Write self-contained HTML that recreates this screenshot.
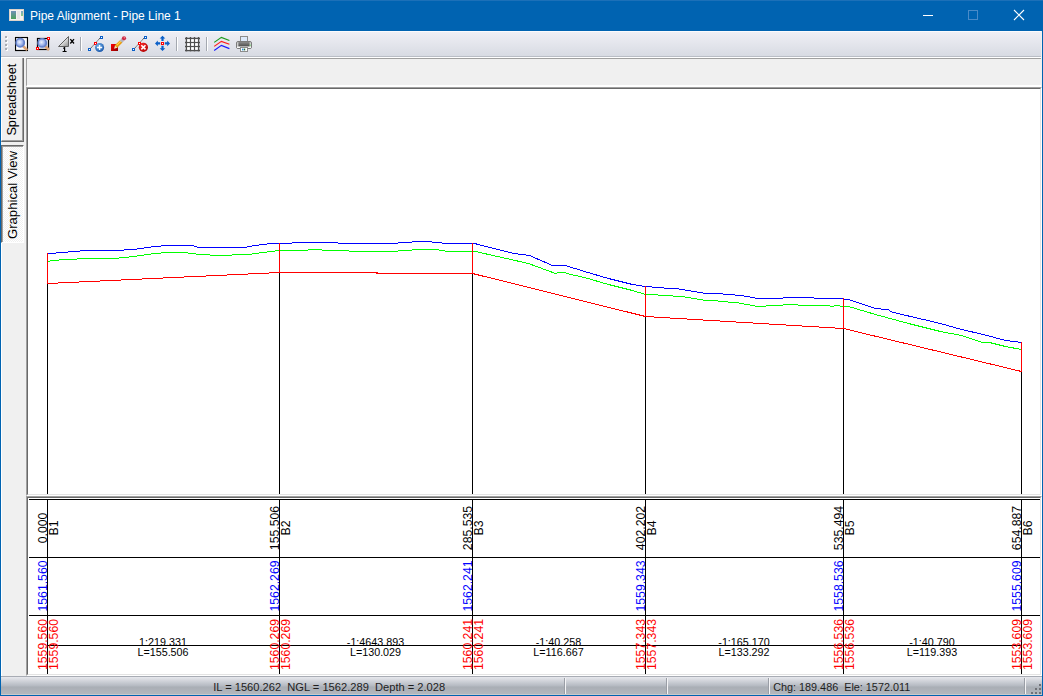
<!DOCTYPE html>
<html><head><meta charset="utf-8"><style>
*{margin:0;padding:0;box-sizing:border-box}
html,body{width:1043px;height:696px;overflow:hidden;background:#f0f0f0;font-family:"Liberation Sans",sans-serif;position:relative}
.a{position:absolute}
#title{left:0;top:0;width:1043px;height:31px;background:#0063b1;border-top:1px solid #1c70b8}
#ttext{left:30px;top:9px;color:#fff;font-size:12px;line-height:15px;white-space:nowrap}
#lb{left:0;top:31px;width:1px;height:665px;background:#0063b1}
#rb{left:1042px;top:31px;width:1px;height:665px;background:#0063b1}
#bb{left:0;top:695px;width:1043px;height:1px;background:#0063b1}
#tb{left:1px;top:31px;width:1040px;height:26px;border-top:1px solid #fbfbfd;border-bottom:1px solid #b9bdc5;background:linear-gradient(#efeff5,#d8dbe3)}
#sb{left:1px;top:676px;width:1041px;height:19px;border-top:1px solid #a8acb4;border-bottom:1px solid #c9cacc;background:linear-gradient(#e7e8ed 0px,#b4b9c1 9px,#a9aeb5 10px,#b3b7bd 17px)}
.stxt{font-size:12px;line-height:14px;color:#1e1e1e;white-space:nowrap}
svg{position:absolute;left:0;top:0}
.rl,.rr{position:absolute;font-size:12px;line-height:12px;white-space:nowrap;width:0;height:0}
.rl span,.rr span{position:absolute}
.rl{transform-origin:0 0}
.mt{position:absolute;font-size:11px;line-height:11px;white-space:nowrap;transform:translateX(-50%);color:#000}
</style></head><body>
<div class="a" id="title"></div>
<div class="a" id="ttext">Pipe Alignment - Pipe Line 1</div>
<div class="a" id="lb"></div><div class="a" id="rb"></div><div class="a" id="bb"></div>
<div class="a" id="tb"></div>

<!-- title icon -->
<div class="a" style="left:9px;top:9px;width:15px;height:12px;background:#f4f2f0;border:1px solid #ddd3ca"></div>
<div class="a" style="left:11px;top:11px;width:5px;height:8px;background:linear-gradient(#7090b8,#4aa05a)"></div>
<div class="a" style="left:17px;top:11px;width:3px;height:8px;background:#e6e6e6"></div>
<div class="a" style="left:21px;top:11px;width:2px;height:5px;background:linear-gradient(#7aa0d0,#8cd080)"></div>
<!-- window buttons -->
<div class="a" style="left:923px;top:15px;width:10px;height:1px;background:#fff"></div>
<div class="a" style="left:968px;top:10px;width:10px;height:10px;border:1px solid #4a8bc8"></div>
<svg width="1043" height="31" style="position:absolute;left:0;top:0"><path d="M1014 10 L1024 20 M1024 10 L1014 20" stroke="#fff" stroke-width="1.1" fill="none"/></svg>
<!-- toolbar grip -->
<div class="a" style="left:5px;top:36px;width:2px;height:2px;background:#a9acb3;box-shadow:1px 1px 0 #fff,0 4px 0 #a9acb3,1px 5px 0 #fff,0 8px 0 #a9acb3,1px 9px 0 #fff,0 12px 0 #a9acb3,1px 13px 0 #fff"></div>
<!-- separators -->
<div class="a" style="left:80px;top:37px;width:1px;height:14px;background:#a4a8b0;box-shadow:1px 0 0 #fff"></div>
<div class="a" style="left:176px;top:37px;width:1px;height:14px;background:#a4a8b0;box-shadow:1px 0 0 #fff"></div>
<div class="a" style="left:206px;top:37px;width:1px;height:14px;background:#a4a8b0;box-shadow:1px 0 0 #fff"></div>
<svg width="1043" height="60" style="position:absolute;left:0;top:0">
<defs>
<radialGradient id="lens" cx="0.42" cy="0.42" r="0.6"><stop offset="0" stop-color="#eef3fd"/><stop offset="0.55" stop-color="#a6baee"/><stop offset="1" stop-color="#6784cc"/></radialGradient>
<linearGradient id="tri" x1="0" y1="0" x2="1" y2="1"><stop offset="0" stop-color="#ffffff"/><stop offset="0.5" stop-color="#e0e0e0"/><stop offset="1" stop-color="#8a8a8a"/></linearGradient>
<radialGradient id="bc" cx="0.4" cy="0.35" r="0.7"><stop offset="0" stop-color="#7ab8f0"/><stop offset="1" stop-color="#1553a8"/></radialGradient>
<radialGradient id="rc" cx="0.4" cy="0.35" r="0.7"><stop offset="0" stop-color="#ff3030"/><stop offset="1" stop-color="#b00000"/></radialGradient>
<linearGradient id="rsq" x1="0" y1="0" x2="1" y2="1"><stop offset="0" stop-color="#ff0000"/><stop offset="1" stop-color="#8a0000"/></linearGradient>
<linearGradient id="pb" x1="0" y1="0" x2="0" y2="1"><stop offset="0" stop-color="#8c8c8c"/><stop offset="1" stop-color="#4a4a4a"/></linearGradient>
</defs>
<!-- icon1 zoom extents -->
<rect x="14" y="36" width="15" height="15" fill="#fff" opacity="0.7"/>
<rect x="15.5" y="37.5" width="12" height="13" fill="#fff" stroke="#000" stroke-width="1.2"/>
<line x1="23" y1="46" x2="27.2" y2="50.2" stroke="#dba57a" stroke-width="2.6"/>
<circle cx="20.2" cy="42.8" r="4.2" fill="url(#lens)" stroke="#6683cc" stroke-width="1.5"/>
<!-- icon2 zoom window -->
<rect x="37.5" y="38.5" width="11" height="11" fill="none" stroke="#000" stroke-width="1.2"/>
<line x1="45" y1="46" x2="49" y2="50" stroke="#dba57a" stroke-width="2.6"/>
<circle cx="42.2" cy="42.9" r="4.2" fill="url(#lens)" stroke="#6683cc" stroke-width="1.5"/>
<rect x="47.5" y="37.5" width="2" height="2" fill="#fff" stroke="#f00" stroke-width="1"/>
<rect x="36.5" y="47.5" width="2" height="2" fill="#fff" stroke="#f00" stroke-width="1"/>
<!-- icon3 triangle -->
<path d="M58.5 46.5 L68.5 36.5 L68.5 46.5 Z" fill="url(#tri)" stroke="#606060" stroke-width="1"/>
<path d="M70.3 39.2 L74 43.5 M74 39.2 L70.3 43.5" stroke="#000" stroke-width="1.3"/>
<path d="M63.3 48.6 L64.6 47.6 L64.6 51.3 M62.6 51.5 L66.6 51.5" stroke="#000" stroke-width="1.2" fill="none"/>
<!-- icon4 add node -->
<line x1="90" y1="49" x2="101" y2="37" stroke="#3a3a3a" stroke-width="1" stroke-dasharray="1.2 0.5"/>
<rect x="88.5" y="48.5" width="2" height="2" fill="#fff" stroke="#0a5fc8" stroke-width="1"/>
<rect x="100.5" y="36.5" width="2" height="2" fill="#fff" stroke="#0a5fc8" stroke-width="1"/>
<rect x="94.5" y="42.5" width="2" height="2" fill="#fff" stroke="#f00" stroke-width="1"/>
<circle cx="99.6" cy="47.5" r="4.5" fill="url(#bc)"/>
<path d="M97 47.5 H102.2 M99.6 44.9 V50.1" stroke="#fff" stroke-width="1.3"/>
<!-- icon5 edit -->
<rect x="111" y="44" width="7" height="7" fill="url(#rsq)"/>
<line x1="115.8" y1="46.8" x2="121.2" y2="41.4" stroke="#e8980c" stroke-width="3.4"/>
<line x1="116.6" y1="45.4" x2="121" y2="41" stroke="#ffd44a" stroke-width="1.1"/>
<line x1="121" y1="41.6" x2="122.8" y2="39.8" stroke="#b4b4bc" stroke-width="3.4"/>
<circle cx="124" cy="38.3" r="2.1" fill="#cc2a44"/>
<circle cx="124.4" cy="37.8" r="0.8" fill="#f08090"/>
<path d="M114 48.8 L115 45.4 L117.4 47.8 Z" fill="#f2e2b4"/>
<!-- icon6 delete node -->
<line x1="134" y1="49" x2="145" y2="37" stroke="#3a3a3a" stroke-width="1" stroke-dasharray="1.2 0.5"/>
<rect x="132.5" y="48.5" width="2" height="2" fill="#fff" stroke="#0a5fc8" stroke-width="1"/>
<rect x="144.5" y="36.5" width="2" height="2" fill="#fff" stroke="#0a5fc8" stroke-width="1"/>
<rect x="138.5" y="42.5" width="2" height="2" fill="#fff" stroke="#f00" stroke-width="1"/>
<circle cx="143.4" cy="47.3" r="4.6" fill="url(#rc)"/>
<path d="M141.3 45.2 L145.5 49.4 M145.5 45.2 L141.3 49.4" stroke="#fff" stroke-width="1.5"/>
<!-- icon7 move -->
<path d="M162.5 35.8 L165.3 38.6 L163.6 38.6 L163.6 41 L161.4 41 L161.4 38.6 L159.7 38.6 Z" fill="#0a5fc8"/>
<path d="M162.5 51 L165.3 48.2 L163.6 48.2 L163.6 45.8 L161.4 45.8 L161.4 48.2 L159.7 48.2 Z" fill="#0a5fc8"/>
<path d="M155 43.4 L157.8 40.6 L157.8 42.3 L160.2 42.3 L160.2 44.5 L157.8 44.5 L157.8 46.2 Z" fill="#0a5fc8"/>
<path d="M170 43.4 L167.2 40.6 L167.2 42.3 L164.8 42.3 L164.8 44.5 L167.2 44.5 L167.2 46.2 Z" fill="#0a5fc8"/>
<rect x="161.5" y="42.5" width="2" height="2" fill="#fff" stroke="#f00" stroke-width="1"/>
<!-- grid -->
<g stroke="#505050" stroke-width="1.4">
<path d="M186.5 37 V51.5 M190.5 37 V51.5 M194.5 37 V51.5 M198.5 37 V51.5 M185 38.5 H200 M185 42.5 H200 M185 46.5 H200 M185 50.5 H200"/>
</g>
<rect x="187.2" y="39.2" width="2.6" height="2.6" fill="#fff"/><rect x="191.2" y="39.2" width="2.6" height="2.6" fill="#fff"/><rect x="195.2" y="39.2" width="2.6" height="2.6" fill="#fff"/>
<rect x="187.2" y="43.2" width="2.6" height="2.6" fill="#fff"/><rect x="191.2" y="43.2" width="2.6" height="2.6" fill="#fff"/><rect x="195.2" y="43.2" width="2.6" height="2.6" fill="#fff"/>
<rect x="187.2" y="47.2" width="2.6" height="2.6" fill="#fff"/><rect x="191.2" y="47.2" width="2.6" height="2.6" fill="#fff"/><rect x="195.2" y="47.2" width="2.6" height="2.6" fill="#fff"/>
<!-- layers -->
<g fill="none" stroke-width="1.15">
<path d="M214.2 42.4 L221.4 37.4 L229.4 40.5" stroke="#1a9a1a"/>
<path d="M214.2 46.4 L221.4 41.4 L229.4 44.3" stroke="#ff1a1a"/>
<path d="M214.2 50.5 L221.4 45.4 L229.4 48.6" stroke="#1a1aff"/>
</g>
<!-- printer -->
<rect x="240.5" y="36.5" width="7" height="6" fill="#dde9fb" stroke="#8c8c8c"/>
<rect x="236.5" y="41.5" width="15" height="7" rx="1.5" fill="#d0d0d0" stroke="#7c7c7c"/>
<rect x="238.4" y="42" width="11.2" height="4.6" fill="url(#pb)"/>
<rect x="237" y="46.6" width="14" height="1.4" fill="#f6f6f6"/>
<rect x="240.5" y="47.5" width="7" height="4" fill="#fff" stroke="#8c8c8c"/>
<rect x="242" y="48.6" width="1.4" height="1.8" fill="#2a8ee0"/><rect x="243.8" y="48.6" width="1.4" height="1.8" fill="#1f6a3a"/>
<rect x="249.6" y="44.6" width="1.2" height="1.2" fill="#70d870"/>
</svg>
<!-- left tabs -->
<div class="a" style="left:1px;top:57px;width:23px;height:85px;background:#f0f0f0;border-top:1px solid #fff;border-left:1px solid #fff;border-right:2px solid #696969;border-bottom:2px solid #696969"></div>
<div class="a" style="left:22px;top:58px;width:1px;height:82px;background:#a0a0a0"></div>
<div class="a" style="left:2px;top:140px;width:21px;height:1px;background:#a0a0a0"></div>
<div class="a" style="left:1px;top:145px;width:23px;height:98px;background:repeating-conic-gradient(#ffffff 0 25%,#f0f0f0 0 50%) 0 0/2px 2px;border-top:1px solid #696969;border-left:1px solid #696969;border-right:1px solid #fff;border-bottom:1px solid #fff"></div>
<div class="a" style="left:2px;top:146px;width:21px;height:1px;background:#a0a0a0"></div>
<div class="a" style="left:2px;top:146px;width:1px;height:96px;background:#a0a0a0"></div>
<div class="a" style="left:1px;top:243px;width:1px;height:433px;background:#fff"></div>
<svg width="30" height="260" style="position:absolute;left:0;top:0" font-family="Liberation Sans" font-size="13.5">
<text transform="translate(16.2,99.6) rotate(-90)" x="-36" textLength="72" lengthAdjust="spacingAndGlyphs" fill="#000">Spreadsheet</text>
<text transform="translate(17.1,195) rotate(-90)" x="-44" textLength="88" lengthAdjust="spacingAndGlyphs" fill="#000">Graphical View</text>
</svg>
<!-- top strip -->
<div class="a" style="left:26px;top:58px;width:1015px;height:29px;border-top:1px solid #a0a0a0;border-left:1px solid #a0a0a0;border-bottom:2px solid #fff;background:#f0f0f0"></div>
<div class="a" style="left:1px;top:57px;width:1040px;height:1px;background:#fff"></div>
<!-- chart panel -->
<div class="a" style="left:26px;top:87px;width:1016px;height:409px;border-top:1px solid #a0a0a0;border-left:1px solid #a0a0a0;border-right:1px solid #fff;border-bottom:1px solid #fff;background:#fff">
 <div style="position:absolute;left:0;top:0;width:1014px;height:407px;border-top:1px solid #696969;border-left:1px solid #696969;border-right:1px solid #e3e3e3;border-bottom:1px solid #e3e3e3"></div>
</div>
<!-- table panel -->
<div class="a" style="left:26px;top:496px;width:1016px;height:180px;border-top:1px solid #a0a0a0;border-left:1px solid #a0a0a0;border-right:1px solid #fff;border-bottom:1px solid #fff;background:#fff">
 <div style="position:absolute;left:0;top:0;width:1014px;height:178px;border-top:1px solid #696969;border-left:1px solid #696969;border-right:1px solid #e3e3e3;border-bottom:1px solid #e3e3e3"></div>
</div>
<svg width="1043" height="696" shape-rendering="crispEdges" stroke-width="1">
<polyline points="47.5,253.5 55.5,253.5 56.5,252.5 67.5,252.5 68.5,251.5 79.5,251.5 80.5,250.5 123.5,250.5 124.5,249.5 136.5,249.5 137.5,248.5 143.5,248.5 144.5,247.5 150.5,247.5 151.5,246.5 160.5,246.5 161.5,245.5 193.5,245.5 194.5,246.5 196.5,246.5 197.5,247.5 246.5,247.5 247.5,246.5 251.5,246.5 252.5,245.5 258.5,245.5 259.5,244.5 266.5,244.5 267.5,243.5 291.5,243.5 292.5,242.5 337.5,242.5 338.5,243.5 397.5,243.5 398.5,242.5 411.5,242.5 412.5,241.5 431.5,241.5 432.5,242.5 441.5,242.5 442.5,243.5 474.5,243.5 513.5,253.5 529.5,255.5 552.5,265.5 565.5,265.5 584.5,271.5 608.5,278.5 632.5,284.5 645.5,286.5 646.5,286.5 651.5,286.5 652.5,287.5 663.5,287.5 664.5,288.5 678.5,288.5 679.5,289.5 684.5,289.5 685.5,290.5 690.5,290.5 691.5,291.5 696.5,291.5 697.5,292.5 702.5,292.5 703.5,293.5 722.5,293.5 723.5,294.5 734.5,294.5 735.5,295.5 743.5,295.5 744.5,296.5 749.5,296.5 750.5,297.5 754.5,297.5 755.5,298.5 782.5,298.5 783.5,297.5 813.5,297.5 814.5,298.5 843.5,298.5 844.5,299.5 848.5,299.5 875.5,308.5 876.5,308.5 880.5,308.5 881.5,309.5 888.5,309.5 890.5,311.5 893.5,312.5 940.5,323.5 961.5,329.5 983.5,334.5 1005.5,340.5 1021.5,342.5" stroke="#0000ff" fill="none"/>
<polyline points="47.5,261.5 49.5,261.5 50.5,260.5 58.5,260.5 59.5,259.5 76.5,259.5 77.5,258.5 118.5,258.5 119.5,257.5 128.5,257.5 129.5,256.5 136.5,256.5 137.5,255.5 143.5,255.5 144.5,254.5 150.5,254.5 151.5,253.5 160.5,253.5 161.5,252.5 187.5,252.5 188.5,253.5 195.5,253.5 196.5,254.5 209.5,254.5 210.5,255.5 231.5,255.5 232.5,254.5 251.5,254.5 252.5,253.5 258.5,253.5 259.5,252.5 266.5,252.5 267.5,251.5 274.5,251.5 275.5,250.5 307.5,250.5 308.5,249.5 321.5,249.5 322.5,250.5 348.5,250.5 349.5,251.5 397.5,251.5 398.5,250.5 411.5,250.5 412.5,249.5 438.5,249.5 439.5,250.5 444.5,250.5 445.5,251.5 475.5,251.5 528.5,263.5 555.5,273.5 558.5,272.5 565.5,272.5 566.5,273.5 584.5,277.5 608.5,284.5 632.5,290.5 645.5,294.5 646.5,294.5 657.5,294.5 658.5,295.5 672.5,295.5 673.5,296.5 684.5,296.5 685.5,297.5 690.5,297.5 691.5,298.5 696.5,298.5 697.5,299.5 702.5,299.5 703.5,300.5 717.5,300.5 718.5,301.5 727.5,301.5 728.5,302.5 738.5,302.5 739.5,303.5 743.5,303.5 744.5,304.5 749.5,304.5 750.5,305.5 754.5,305.5 755.5,306.5 765.5,306.5 766.5,305.5 782.5,305.5 783.5,304.5 797.5,304.5 798.5,305.5 829.5,305.5 830.5,306.5 833.5,306.5 834.5,305.5 839.5,305.5 840.5,306.5 848.5,306.5 875.5,314.5 908.5,323.5 940.5,331.5 961.5,335.5 982.5,342.5 989.5,342.5 1005.5,346.5 1021.5,349.5" stroke="#00ff00" fill="none"/>
<polyline points="47.5,283.5 279.5,272.5 472.5,273.5 645.5,316.5 843.5,328.5 1021.5,371.5" stroke="#ff0000" fill="none"/>
<line x1="47.5" y1="253" x2="47.5" y2="284" stroke="#ff0000"/>
<line x1="47.5" y1="284" x2="47.5" y2="494" stroke="#000"/>
<line x1="279.5" y1="243" x2="279.5" y2="273" stroke="#ff0000"/>
<line x1="279.5" y1="273" x2="279.5" y2="494" stroke="#000"/>
<line x1="472.5" y1="243" x2="472.5" y2="274" stroke="#ff0000"/>
<line x1="472.5" y1="274" x2="472.5" y2="494" stroke="#000"/>
<line x1="645.5" y1="286" x2="645.5" y2="317" stroke="#ff0000"/>
<line x1="645.5" y1="317" x2="645.5" y2="494" stroke="#000"/>
<line x1="843.5" y1="298" x2="843.5" y2="329" stroke="#ff0000"/>
<line x1="843.5" y1="329" x2="843.5" y2="494" stroke="#000"/>
<line x1="1021.5" y1="342" x2="1021.5" y2="372" stroke="#ff0000"/>
<line x1="1021.5" y1="372" x2="1021.5" y2="494" stroke="#000"/>
<line x1="29" y1="499.5" x2="1040" y2="499.5" stroke="#000"/>
<line x1="29" y1="557.5" x2="1040" y2="557.5" stroke="#000"/>
<line x1="29" y1="615.5" x2="1040" y2="615.5" stroke="#000"/>
<line x1="47" y1="645.5" x2="1021" y2="645.5" stroke="#000"/>
<line x1="47.5" y1="499" x2="47.5" y2="674" stroke="#000"/>
<line x1="279.5" y1="499" x2="279.5" y2="674" stroke="#000"/>
<line x1="472.5" y1="499" x2="472.5" y2="674" stroke="#000"/>
<line x1="645.5" y1="499" x2="645.5" y2="674" stroke="#000"/>
<line x1="843.5" y1="499" x2="843.5" y2="674" stroke="#000"/>
<line x1="1021.5" y1="499" x2="1021.5" y2="674" stroke="#000"/>
</svg>
<svg width="1043" height="696" font-family="Liberation Sans" font-size="12.25">
<text transform="translate(47,528) rotate(-90)" text-anchor="middle" fill="#000">0.000</text>
<text transform="translate(58,528) rotate(-90)" text-anchor="middle" fill="#000">B1</text>
<text transform="translate(47,586) rotate(-90)" text-anchor="middle" fill="#0000ff">1561.560</text>
<text transform="translate(47,644.5) rotate(-90)" text-anchor="middle" fill="#ff0000">1559.560</text>
<text transform="translate(58,644.5) rotate(-90)" text-anchor="middle" fill="#ff0000">1559.560</text>
<text transform="translate(279,528) rotate(-90)" text-anchor="middle" fill="#000">155.506</text>
<text transform="translate(290,528) rotate(-90)" text-anchor="middle" fill="#000">B2</text>
<text transform="translate(279,586) rotate(-90)" text-anchor="middle" fill="#0000ff">1562.269</text>
<text transform="translate(279,644.5) rotate(-90)" text-anchor="middle" fill="#ff0000">1560.269</text>
<text transform="translate(290,644.5) rotate(-90)" text-anchor="middle" fill="#ff0000">1560.269</text>
<text transform="translate(472,528) rotate(-90)" text-anchor="middle" fill="#000">285.535</text>
<text transform="translate(483,528) rotate(-90)" text-anchor="middle" fill="#000">B3</text>
<text transform="translate(472,586) rotate(-90)" text-anchor="middle" fill="#0000ff">1562.241</text>
<text transform="translate(472,644.5) rotate(-90)" text-anchor="middle" fill="#ff0000">1560.241</text>
<text transform="translate(483,644.5) rotate(-90)" text-anchor="middle" fill="#ff0000">1560.241</text>
<text transform="translate(645,528) rotate(-90)" text-anchor="middle" fill="#000">402.202</text>
<text transform="translate(656,528) rotate(-90)" text-anchor="middle" fill="#000">B4</text>
<text transform="translate(645,586) rotate(-90)" text-anchor="middle" fill="#0000ff">1559.343</text>
<text transform="translate(645,644.5) rotate(-90)" text-anchor="middle" fill="#ff0000">1557.343</text>
<text transform="translate(656,644.5) rotate(-90)" text-anchor="middle" fill="#ff0000">1557.343</text>
<text transform="translate(843,528) rotate(-90)" text-anchor="middle" fill="#000">535.494</text>
<text transform="translate(854,528) rotate(-90)" text-anchor="middle" fill="#000">B5</text>
<text transform="translate(843,586) rotate(-90)" text-anchor="middle" fill="#0000ff">1558.536</text>
<text transform="translate(843,644.5) rotate(-90)" text-anchor="middle" fill="#ff0000">1556.536</text>
<text transform="translate(854,644.5) rotate(-90)" text-anchor="middle" fill="#ff0000">1556.536</text>
<text transform="translate(1021,528) rotate(-90)" text-anchor="middle" fill="#000">654.887</text>
<text transform="translate(1032,528) rotate(-90)" text-anchor="middle" fill="#000">B6</text>
<text transform="translate(1021,586) rotate(-90)" text-anchor="middle" fill="#0000ff">1555.609</text>
<text transform="translate(1021,644.5) rotate(-90)" text-anchor="middle" fill="#ff0000">1553.609</text>
<text transform="translate(1032,644.5) rotate(-90)" text-anchor="middle" fill="#ff0000">1553.609</text>
<text x="163.0" y="646" text-anchor="middle" font-size="10.75" fill="#000">1:219.331</text>
<text x="163.0" y="655.5" text-anchor="middle" font-size="10.75" fill="#000">L=155.506</text>
<text x="375.5" y="646" text-anchor="middle" font-size="10.75" fill="#000">-1:4643.893</text>
<text x="375.5" y="655.5" text-anchor="middle" font-size="10.75" fill="#000">L=130.029</text>
<text x="558.5" y="646" text-anchor="middle" font-size="10.75" fill="#000">-1:40.258</text>
<text x="558.5" y="655.5" text-anchor="middle" font-size="10.75" fill="#000">L=116.667</text>
<text x="744.0" y="646" text-anchor="middle" font-size="10.75" fill="#000">-1:165.170</text>
<text x="744.0" y="655.5" text-anchor="middle" font-size="10.75" fill="#000">L=133.292</text>
<text x="932.0" y="646" text-anchor="middle" font-size="10.75" fill="#000">-1:40.790</text>
<text x="932.0" y="655.5" text-anchor="middle" font-size="10.75" fill="#000">L=119.393</text>
</svg>
<div class="a" id="sb"></div>
<svg width="1043" height="696" style="position:absolute;left:0;top:0;white-space:pre" font-family="Liberation Sans" font-size="11.5" fill="#1e1e1e">
<text x="213.2" y="691" textLength="232" lengthAdjust="spacingAndGlyphs">IL = 1560.262&#160; NGL = 1562.289&#160; Depth = 2.028</text>
<text x="773.2" y="691" textLength="137" lengthAdjust="spacingAndGlyphs">Chg: 189.486&#160; Ele: 1572.011</text>
</svg>
<!-- status separators -->
<div class="a" style="left:564px;top:678px;width:1px;height:16px;background:#9a9ea6;box-shadow:1px 0 0 #f4f4f6"></div>
<div class="a" style="left:666px;top:678px;width:1px;height:16px;background:#9a9ea6;box-shadow:1px 0 0 #f4f4f6"></div>
<div class="a" style="left:768px;top:678px;width:1px;height:16px;background:#9a9ea6;box-shadow:1px 0 0 #f4f4f6"></div>
<div class="a" style="left:1024px;top:678px;width:1px;height:16px;background:#9a9ea6;box-shadow:1px 0 0 #f4f4f6"></div>
<div class="a" style="left:1039px;top:684px;width:2px;height:2px;background:#707278;box-shadow:-4px 4px 0 #707278,0 4px 0 #707278,-8px 8px 0 #707278,-4px 8px 0 #707278,0 8px 0 #707278"></div>
</body></html>
